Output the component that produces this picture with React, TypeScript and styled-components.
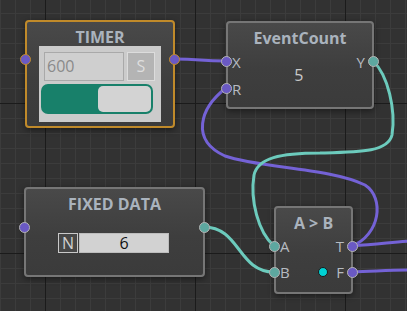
import React from "react";
import styled, { createGlobalStyle } from "styled-components";

const Global = createGlobalStyle`
  html, body { margin: 0; padding: 0; background: #313131; }
  body { font-family: "Open Sans", "Noto Sans", sans-serif; }
`;

const Canvas = styled.div`
  position: relative;
  width: 407px;
  height: 311px;
  overflow: hidden;
  background-color: #323232;
  background-image:
    linear-gradient(to right, #1b1b1b 1px, transparent 1px),
    linear-gradient(to bottom, #1b1b1b 1px, transparent 1px),
    linear-gradient(to right, #3c3c3c 1px, transparent 1px),
    linear-gradient(to bottom, #3c3c3c 1px, transparent 1px);
  background-size: 150px 150px, 150px 150px, 15px 15px, 15px 15px;
  background-position: 45px 0, 0 103px, 0 0, 0 13px;
`;

const Wires = styled.svg`
  position: absolute;
  inset: 0;
  width: 407px;
  height: 311px;
`;

const Node = styled.div<{ $x: number; $y: number; $w: number; $h: number; $selected?: boolean }>`
  position: absolute;
  left: ${(p) => p.$x}px;
  top: ${(p) => p.$y}px;
  width: ${(p) => p.$w}px;
  height: ${(p) => p.$h}px;
  box-sizing: border-box;
  border: 2px solid ${(p) => (p.$selected ? "#c08a2a" : "#767676")};
  border-radius: 4px;
  background: linear-gradient(180deg, #494949 0%, #3e3e3e 55%, #3b3b3b 100%);
  box-shadow: 0 2px 6px rgba(0, 0, 0, 0.45);
  display: flex;
  flex-direction: column;
`;

const Title = styled.div<{ $h: number }>`
  height: ${(p) => p.$h}px;
  padding-top: 5px;
  box-sizing: border-box;
  line-height: 21px;
  text-align: center;
  font-weight: 700;
  font-size: 16px;
  color: #aab3bd;
  white-space: nowrap;
  flex: none;
`;

const Port = styled.div<{ $side: "left" | "right"; $y: number; $kind: "purple" | "teal"; $ring?: string }>`
  position: absolute;
  ${(p) => p.$side}: -7px;
  top: ${(p) => p.$y - 2 - 5.5}px;
  width: 11px;
  height: 11px;
  box-sizing: border-box;
  border-radius: 50%;
  border: 1.5px solid ${(p) => p.$ring ?? "#b4b4b4"};
  background: ${(p) => (p.$kind === "purple" ? "#6a59c4" : "#5da8a0")};
  z-index: 2;
`;

const PortGrid = styled.div<{ $row: number }>`
  display: grid;
  grid-template-columns: auto 1fr auto;
  grid-template-rows: ${(p) => p.$row}px ${(p) => p.$row}px;
  align-items: center;
`;

const Label = styled.span<{ $side: "left" | "right"; $r: number }>`
  grid-row: ${(p) => p.$r};
  grid-column: ${(p) => (p.$side === "left" ? 1 : 3)};
  justify-self: ${(p) => (p.$side === "left" ? "start" : "end")};
  font-size: 15px;
  color: #b6bbc1;
  padding-left: ${(p) => (p.$side === "left" ? 4 : 0)}px;
  padding-right: ${(p) => (p.$side === "right" ? 7 : 0)}px;
  display: flex;
  align-items: center;
  gap: 8px;
  line-height: 18px;
`;

const Value = styled.span`
  grid-row: 1 / span 2;
  grid-column: 2;
  text-align: center;
  font-size: 16px;
  color: #c9c9c9;
`;

const Panel = styled.div`
  align-self: center;
  width: 122px;
  box-sizing: border-box;
  padding: 6px 6px 8px 2px;
  background: #cbcbcb;
  display: flex;
  flex-direction: column;
  gap: 3px;
`;

const InputRow = styled.div`
  display: flex;
  gap: 3px;
  padding-left: 3px;
`;

const NumInput = styled.div`
  width: 80px;
  height: 29px;
  box-sizing: border-box;
  border: 1px solid #a9a9a9;
  background: #cfcfcf;
  color: #8a8a8a;
  font-size: 16px;
  line-height: 27px;
  padding-left: 2px;
`;

const UnitBox = styled.div`
  width: 28px;
  height: 29px;
  box-sizing: border-box;
  border: 1px solid #dcdcdc;
  background: #b4b4b4;
  color: #dedede;
  font-size: 16px;
  line-height: 27px;
  text-align: center;
`;

const Toggle = styled.div`
  width: 112px;
  height: 30px;
  box-sizing: border-box;
  border-radius: 7px;
  background: #18806a;
  display: flex;
  justify-content: flex-end;
  align-items: center;
  padding: 2px;
`;

const Knob = styled.div`
  width: 53px;
  height: 26px;
  border-radius: 5px;
  background: #d3d3d3;
`;

const Field = styled.div`
  align-self: center;
  display: flex;
  gap: 1px;
  margin-top: 20px;
  margin-left: -2px;
`;

const TypeTag = styled.div`
  width: 20px;
  height: 20px;
  box-sizing: border-box;
  border: 1px solid #c9c9c9;
  background: #474747;
  color: #d0d0d0;
  font-size: 16px;
  line-height: 18px;
  text-align: center;
`;

const FieldValue = styled.div`
  width: 90px;
  height: 20px;
  box-sizing: border-box;
  border: 1px solid #bdbdbd;
  background: #d2d2d2;
  color: #111;
  font-size: 16px;
  line-height: 18px;
  text-align: center;
`;

const Dot = styled.span`
  width: 10px;
  height: 10px;
  box-sizing: border-box;
  border-radius: 50%;
  border: 1px solid #1a1a1a;
  background: #00d2d4;
`;

const PURPLE = "#7462d6";
const TEAL = "#6ccbbd";

export default function App() {
  return (
    <>
      <Global />
      <Canvas>
        <Wires viewBox="0 0 407 311">
          <g fill="none" strokeWidth={3} strokeLinecap="round">
            <path d="M175 59 C 200 59, 200 61, 226 61" stroke={PURPLE} />
            <path
              d="M226 88 C 200 108, 190 140, 225 156 C 260 168, 330 168, 365 185 C 385 198, 380 235, 352 246"
              stroke={PURPLE}
            />
            <path
              d="M373 61 C 388 75, 396 110, 392 135 C 388 152, 360 152, 320 153 C 280 153, 258 158, 254 175 C 250 200, 258 232, 274 246"
              stroke={TEAL}
            />
            <path d="M204 227 C 240 227, 238 272, 274 272" stroke={TEAL} />
            <path d="M352 246 C 380 244, 395 242, 412 241" stroke={PURPLE} />
            <path d="M352 272 C 380 271, 395 270, 412 270" stroke={PURPLE} />
          </g>
        </Wires>

        <Node $x={25} $y={20} $w={150} $h={108} $selected>
          <Port $side="left" $y={39} $kind="purple" $ring="#c08a2a" />
          <Port $side="right" $y={39} $kind="purple" $ring="#c08a2a" />
          <Title $h={24}>TIMER</Title>
          <Panel>
            <InputRow>
              <NumInput>600</NumInput>
              <UnitBox>S</UnitBox>
            </InputRow>
            <Toggle>
              <Knob />
            </Toggle>
          </Panel>
        </Node>

        <Node $x={226} $y={21} $w={148} $h={88}>
          <Port $side="left" $y={40} $kind="purple" />
          <Port $side="left" $y={67} $kind="purple" />
          <Port $side="right" $y={40} $kind="teal" />
          <Title $h={25}>EventCount</Title>
          <PortGrid $row={27}>
            <Label $side="left" $r={1}>X</Label>
            <Label $side="left" $r={2}>R</Label>
            <Value>5</Value>
            <Label $side="right" $r={1}>Y</Label>
          </PortGrid>
        </Node>

        <Node $x={24} $y={187} $w={181} $h={90}>
          <Port $side="left" $y={40} $kind="purple" />
          <Port $side="right" $y={40} $kind="teal" />
          <Title $h={24}>FIXED DATA</Title>
          <Field>
            <TypeTag>N</TypeTag>
            <FieldValue>6</FieldValue>
          </Field>
        </Node>

        <Node $x={274} $y={206} $w={79} $h={88}>
          <Port $side="left" $y={40} $kind="teal" />
          <Port $side="left" $y={66} $kind="teal" />
          <Port $side="right" $y={40} $kind="purple" />
          <Port $side="right" $y={66} $kind="purple" />
          <Title $h={25}>A &gt; B</Title>
          <PortGrid $row={26}>
            <Label $side="left" $r={1}>A</Label>
            <Label $side="left" $r={2}>B</Label>
            <Label $side="right" $r={1}>T</Label>
            <Label $side="right" $r={2}>
              <Dot />F
            </Label>
          </PortGrid>
        </Node>
      </Canvas>
    </>
  );
}
